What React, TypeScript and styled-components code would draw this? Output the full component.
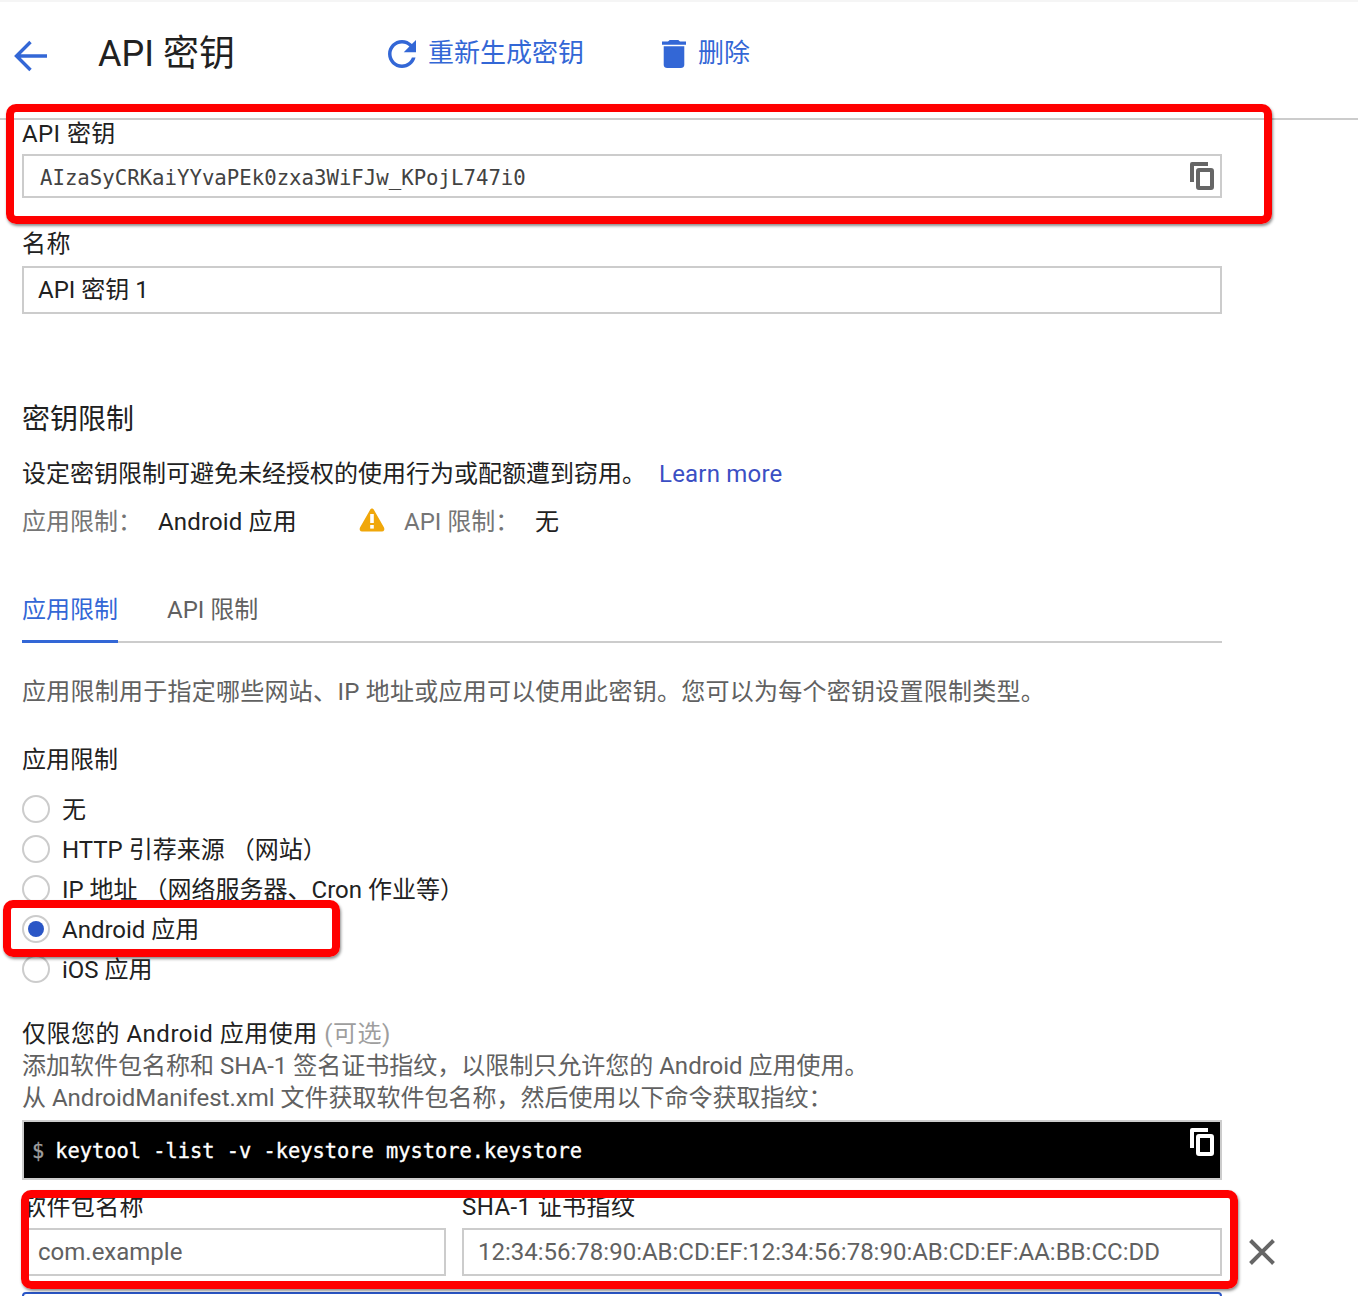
import React from 'react';
import styled, { createGlobalStyle } from 'styled-components';

const GlobalStyle = createGlobalStyle`
  html, body {
    margin: 0;
    padding: 0;
    background: #fff;
  }
  body {
    font-family: Roboto, "Noto Sans CJK SC", sans-serif;
    color: #212121;
  }
`;

const Page = styled.div`
  position: relative;
  width: 1358px;
  height: 1296px;
  overflow: hidden;
  background: #fff;
  border-top: 2px solid #f5f5f5;
  box-sizing: border-box;
`;

const Header = styled.header`
  display: flex;
  align-items: center;
  height: 118px;
  padding: 0 0 14px 14px;
  box-sizing: border-box;
  border-bottom: 2px solid #ccc;
`;

const BackButton = styled.span`
  display: flex;
  width: 84px;
  margin-top: 6px;
`;

const Title = styled.h1`
  margin: 0;
  width: 290px;
  padding-top: 2px;
  font-size: 36px;
  font-weight: 400;
  line-height: 42px;
`;

const HeaderAction = styled.span<{ $width: number }>`
  display: flex;
  align-items: center;
  gap: 12px;
  width: ${p => p.$width}px;
  font-size: 26px;
  line-height: 36px;
  color: #3367d6;

  svg {
    margin-top: 2px;
  }
`;

const Main = styled.main`
  padding-left: 22px;
  width: 1200px;
`;

const FieldLabel = styled.div<{ $top: number; $bottom: number }>`
  margin: ${p => p.$top}px 0 ${p => p.$bottom}px;
  font-size: 24px;
  line-height: 28px;
  letter-spacing: 0.4px;
`;

const Field = styled.div<{ $height: number }>`
  display: flex;
  align-items: center;
  justify-content: space-between;
  height: ${p => p.$height}px;
  padding: 0 14px;
  box-sizing: border-box;
  border: 2px solid #ccc;
  background: #fff;
  font-size: 24px;
  line-height: 28px;
`;

const KeyText = styled.span`
  padding: 3px 0 0 2px;
  font-family: "DejaVu Sans Mono", monospace;
  font-size: 20.7px;
  line-height: 28px;
  color: #424242;
`;

const KeyCopy = styled.span`
  display: flex;
  margin-right: -8px;
`;

const SectionTitle = styled.h2`
  margin: 86px 0 0;
  padding-top: 4px;
  font-size: 28px;
  font-weight: 400;
  line-height: 32px;
`;

const Text = styled.p<{ $top: number; $muted?: boolean; $spacing?: number }>`
  margin: ${p => p.$top}px 0 0;
  padding-top: 2px;
  font-size: 24px;
  line-height: 30px;
  white-space: nowrap;
  letter-spacing: ${p => p.$spacing ?? 0}px;
  color: ${p => (p.$muted ? '#616161' : '#212121')};
`;

const LearnMore = styled.a`
  margin-left: 13px;
  color: #3b4fc4;
  letter-spacing: 0.2px;
  text-decoration: none;
`;

const Summary = styled.div`
  display: flex;
  align-items: center;
  height: 32px;
  margin-top: 16px;
  font-size: 24px;
  line-height: 30px;
`;

const SummaryKey = styled.span<{ $width: number; $left?: number }>`
  width: ${p => p.$width}px;
  margin-left: ${p => p.$left ?? 0}px;
  padding-top: 2px;
  color: #757575;
`;

const SummaryValue = styled.span<{ $width?: number }>`
  padding-top: 2px;
  letter-spacing: 0.15px;
  ${p => (p.$width ? `width: ${p.$width}px;` : '')}
`;

const WarningGlyph = styled.svg`
  margin-bottom: 3px;
`;

const Tabs = styled.div`
  display: flex;
  gap: 49px;
  height: 53px;
  margin-top: 53px;
  box-sizing: border-box;
  border-bottom: 2px solid #ccc;
`;

const Tab = styled.span<{ $active?: boolean }>`
  height: ${p => (p.$active ? 50 : 51)}px;
  font-size: 24px;
  line-height: 40px;
  color: ${p => (p.$active ? '#3367d6' : '#616161')};
  ${p => (p.$active ? 'border-bottom: 3px solid #3367d6;' : '')}
`;

const RadioList = styled.div`
  margin-top: 14px;
`;

const RadioRow = styled.label`
  display: flex;
  align-items: center;
  gap: 12px;
  height: 40px;
  font-size: 24px;
  white-space: nowrap;
`;

const RadioText = styled.span`
  padding-top: 2px;
  line-height: 30px;
`;

const RadioCircle = styled.span<{ $checked?: boolean }>`
  display: flex;
  align-items: center;
  justify-content: center;
  width: 28px;
  height: 28px;
  box-sizing: border-box;
  border: 2px solid #ccc;
  border-radius: 50%;

  &::after {
    content: '';
    display: ${p => (p.$checked ? 'block' : 'none')};
    width: 16px;
    height: 16px;
    border-radius: 50%;
    background: #2a56c6;
  }
`;

const Optional = styled.span`
  color: #9e9e9e;
`;

const CodeBox = styled.div`
  display: flex;
  align-items: flex-start;
  justify-content: space-between;
  height: 60px;
  margin-top: 7px;
  padding: 0 16px 0 8px;
  box-sizing: border-box;
  border: 2px solid #ccc;
  background: #000;
  color: #fff;
  font-family: "DejaVu Sans Mono", monospace;
  font-size: 20.35px;
  -webkit-text-stroke: 0.35px currentColor;
`;

const Command = styled.span`
  line-height: 58px;
  white-space: nowrap;
`;

const Prompt = styled.span`
  margin-right: 11px;
  color: #9e9e9e;
`;

const CodeCopy = styled.span`
  margin-top: 6px;
  margin-right: -10px;
  display: flex;
`;

const PackageRow = styled.div`
  display: grid;
  grid-template-columns: 424px 760px 54px;
  column-gap: 16px;
  width: 1270px;
`;

const PackageCell = styled.div``;

const RemoveCell = styled.div`
  display: flex;
  align-items: center;
  align-self: end;
  height: 48px;
  padding-left: 11px;
`;

const InputText = styled.span`
  font-size: 24px;
  color: #616161;
  white-space: nowrap;
`;

const BlueBox = styled.div`
  height: 60px;
  margin-top: 16px;
  box-sizing: border-box;
  border: 2px solid #2a56c6;
  border-radius: 4px;
`;

const Callout = styled.div<{ $left: number; $top: number; $width: number; $height: number }>`
  position: absolute;
  left: ${p => p.$left}px;
  top: ${p => p.$top}px;
  width: ${p => p.$width}px;
  height: ${p => p.$height}px;
  box-sizing: border-box;
  border: 8px solid #ff0000;
  border-radius: 10px;
  box-shadow: 1px 2px 3px rgba(0, 0, 0, 0.45);
  pointer-events: none;
`;

const CopyIcon = ({ color }: { color: string }) => (
  <svg width="24" height="28" viewBox="0 0 24 28" fill="none">
    <path d="M18 0H2a2 2 0 0 0-2 2v18h4V4h14z" fill={color} />
    <rect x="8" y="8" width="14" height="18" rx="1" stroke={color} strokeWidth="4" />
  </svg>
);

const WarningIcon = () => (
  <WarningGlyph width="26" height="24" viewBox="0 0 26 24">
    <path d="M11 2 L1 19.5 C0 21.5 1 23.5 3 23.5 H23 C25 23.5 26 21.5 25 19.5 L15 2 C14 0 12 0 11 2 Z" fill="#f0a70a" />
    <rect x="11.2" y="6" width="3.6" height="9" fill="#fff" />
    <rect x="11.2" y="17" width="3.6" height="3.6" fill="#fff" />
  </WarningGlyph>
);

export default function App() {
  return (
    <Page>
      <GlobalStyle />
      <Header>
        <BackButton>
          <svg width="34" height="32" viewBox="0 0 34 32" fill="none" stroke="#3367d6" strokeWidth="3.4">
            <path d="M33 16H3M16.5 2 2.5 16l14 14" />
          </svg>
        </BackButton>
        <Title>API 密钥</Title>
        <HeaderAction $width={274}>
          <svg width="28" height="28" viewBox="4 4 16 16" fill="#3367d6">
            <path d="M17.65 6.35C16.2 4.9 14.21 4 12 4c-4.42 0-7.99 3.58-7.99 8s3.57 8 7.99 8c3.73 0 6.84-2.55 7.73-6h-2.08c-.82 2.33-3.04 4-5.65 4-3.31 0-6-2.69-6-6s2.69-6 6-6c1.66 0 3.14.69 4.22 1.78L13 11h7V4l-2.35 2.35z" />
          </svg>
          重新生成密钥
        </HeaderAction>
        <HeaderAction $width={110}>
          <svg width="24" height="28" viewBox="5 3 14 18" fill="#3367d6" preserveAspectRatio="none">
            <path d="M6 19c0 1.1.9 2 2 2h8c1.1 0 2-.9 2-2V7H6v12zM19 4h-3.5l-1-1h-5l-1 1H5v2h14V4z" />
          </svg>
          删除
        </HeaderAction>
      </Header>

      <Main>
        <FieldLabel $top={0} $bottom={6}>API 密钥</FieldLabel>
        <Field $height={44}>
          <KeyText>AIzaSyCRKaiYYvaPEk0zxa3WiFJw_KPojL747i0</KeyText>
          <KeyCopy><CopyIcon color="#666" /></KeyCopy>
        </Field>

        <FieldLabel $top={32} $bottom={8}>名称</FieldLabel>
        <Field $height={48}>API 密钥 1</Field>

        <SectionTitle>密钥限制</SectionTitle>
        <Text $top={21}>
          设定密钥限制可避免未经授权的使用行为或配额遭到窃用。
          <LearnMore href="#">Learn more</LearnMore>
        </Text>

        <Summary>
          <SummaryKey $width={136}>应用限制：</SummaryKey>
          <SummaryValue $width={201}>Android 应用</SummaryValue>
          <WarningIcon />
          <SummaryKey $width={131} $left={19}>API 限制：</SummaryKey>
          <SummaryValue>无</SummaryValue>
        </Summary>

        <Tabs>
          <Tab $active>应用限制</Tab>
          <Tab>API 限制</Tab>
        </Tabs>

        <Text $top={32} $muted $spacing={0.26}>应用限制用于指定哪些网站、IP 地址或应用可以使用此密钥。您可以为每个密钥设置限制类型。</Text>
        <Text $top={36}>应用限制</Text>

        <RadioList>
          <RadioRow><RadioCircle /><RadioText>无</RadioText></RadioRow>
          <RadioRow><RadioCircle /><RadioText>HTTP 引荐来源 （网站）</RadioText></RadioRow>
          <RadioRow><RadioCircle /><RadioText>IP 地址 （网络服务器、Cron 作业等）</RadioText></RadioRow>
          <RadioRow><RadioCircle $checked /><RadioText>Android 应用</RadioText></RadioRow>
          <RadioRow><RadioCircle /><RadioText>iOS 应用</RadioText></RadioRow>
        </RadioList>

        <Text $top={28} $spacing={0.5}>仅限您的 Android 应用使用 <Optional>(可选)</Optional></Text>
        <Text $top={0} $muted>添加软件包名称和 SHA-1 签名证书指纹，以限制只允许您的 Android 应用使用。</Text>
        <Text $top={0} $muted>从 AndroidManifest.xml 文件获取软件包名称，然后使用以下命令获取指纹：</Text>

        <CodeBox>
          <Command><Prompt>$</Prompt>keytool -list -v -keystore mystore.keystore</Command>
          <CodeCopy><CopyIcon color="#fff" /></CodeCopy>
        </CodeBox>

        <PackageRow>
          <PackageCell>
            <FieldLabel $top={13} $bottom={7}>软件包名称</FieldLabel>
            <Field $height={48}><InputText>com.example</InputText></Field>
          </PackageCell>
          <PackageCell>
            <FieldLabel $top={13} $bottom={7}>SHA-1 证书指纹</FieldLabel>
            <Field $height={48}><InputText>12:34:56:78:90:AB:CD:EF:12:34:56:78:90:AB:CD:EF:AA:BB:CC:DD</InputText></Field>
          </PackageCell>
          <RemoveCell>
            <svg width="26" height="26" viewBox="0 0 26 26" fill="none" stroke="#666" strokeWidth="4">
              <path d="M1.5 1.5 24.5 24.5M24.5 1.5 1.5 24.5" />
            </svg>
          </RemoveCell>
        </PackageRow>

        <BlueBox />
      </Main>

      <Callout $left={6} $top={102} $width={1266} $height={120} />
      <Callout $left={3} $top={898} $width={337} $height={57} />
      <Callout $left={21} $top={1188} $width={1217} $height={99} />
    </Page>
  );
}
